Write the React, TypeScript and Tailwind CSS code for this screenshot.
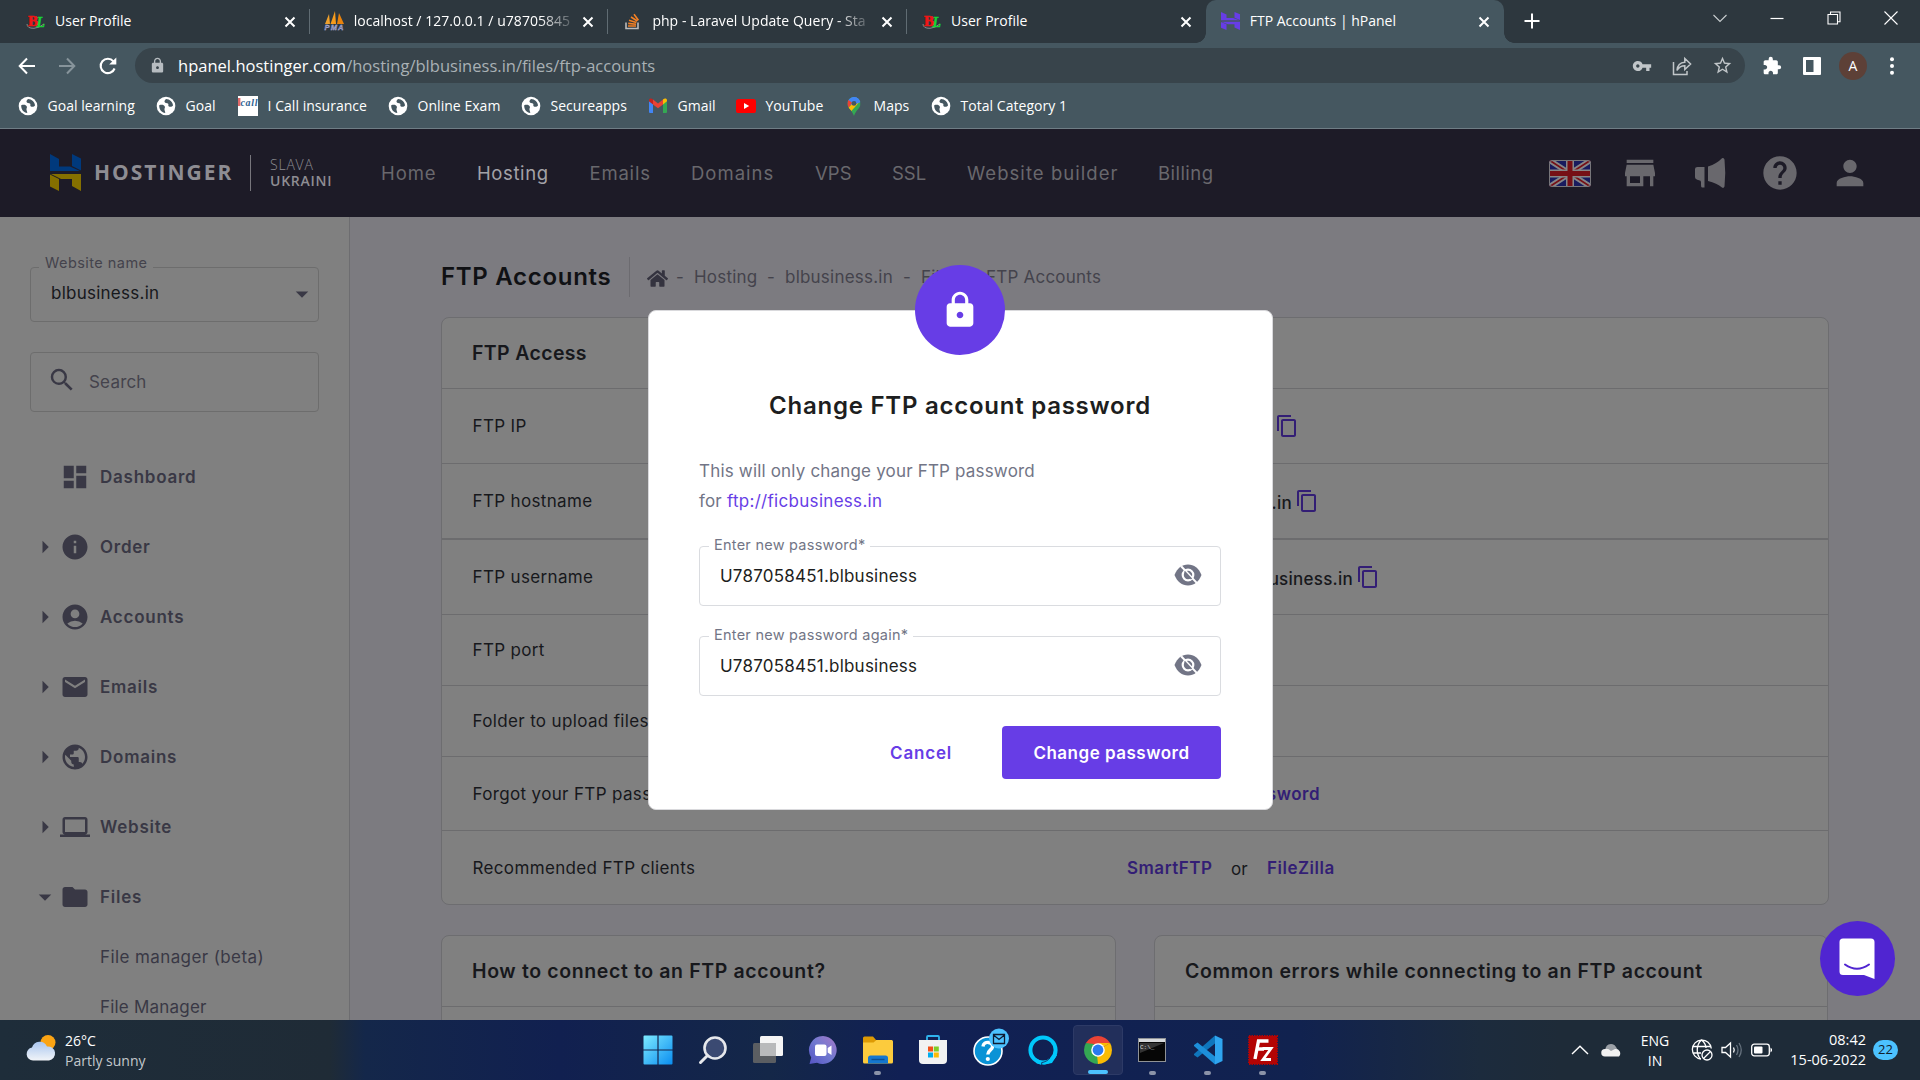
import type { ReactNode } from "react";
import {
  MdDashboard, MdInfo, MdAccountCircle, MdEmail, MdPublic, MdLaptop, MdFolder, MdSearch, MdLock,
  MdContentCopy, MdStore, MdHelp, MdPerson, MdVpnKey, MdStarBorder, MdExtension, MdArrowDropDown,
} from "react-icons/md";
import { FaHome } from "react-icons/fa";

/* ---------- Browser icons ---------- */

function BlIcon() {
  return (
    <svg viewBox="0 0 20 18" className="h-[18px] w-5">
      <path d="M1 12 Q1 16.500 8 16.300 Q13 16 18 12" fill="none" stroke="#858a8d" strokeWidth="1" />
      <text x="2" y="13.5" fontFamily="Liberation Serif, serif" fontWeight="700" fontSize="15" fill="#f01515" stroke="#f01515" strokeWidth="0.6">B</text>
      <text x="10.5" y="14.5" textLength="8.5" lengthAdjust="spacingAndGlyphs" fontFamily="Liberation Serif, serif" fontWeight="700" fontStyle="italic" fontSize="15" fill="#19d534" stroke="#19d534" strokeWidth="0.4">L</text>
    </svg>
  );
}

function PmaIcon() {
  return (
    <svg viewBox="0 0 20 20" className="size-5 overflow-visible">
      <path d="M5 3 L6 13 L1 13 Z" fill="#f0a12c" />
      <path d="M11 0 L12 13 L6.5 13 Z" fill="#f79b1c" />
      <path d="M15 2 L20 13 L13 13 Z" fill="#e8820c" />
      <text x="0.5" y="19.3" textLength="19" fontFamily="Liberation Sans, sans-serif" fontStyle="italic" fontWeight="700" fontSize="7.5" fill="#6d70a8" stroke="#c9cbe8" strokeWidth="0.3">PMA</text>
    </svg>
  );
}

function StackIcon() {
  return (
    <svg viewBox="0 0 18 18" className="h-[18px] w-[18px]">
      <path d="M2 10.5 V16.5 H14 V10.5" fill="none" stroke="#bcbbbb" strokeWidth="1.6" />
      <path d="M4 14 H12 M4.2 11.4 L12 12.2 M5 8.3 L12.4 10.4 M7 5 L13.3 9 M10 2.2 L14.4 8.2" stroke="#f48024" strokeWidth="1.6" fill="none" />
    </svg>
  );
}

function HostingerIcon({ top, bottom, className }: { top: string; bottom: string; className: string }) {
  return (
    <svg viewBox="0 0 31 37" className={className} preserveAspectRatio="none">
      <path d="M0 0 L9 5 V12.5 H20 L30 17 H0 Z M22 0 L31 4.5 V16.5 L22 12 Z" fill={top} />
      <path d="M31 37 L22 32 V25 H11 L1 20 H31 Z M0 20.5 L9 25 V37 L0 32.5 Z" fill={bottom} />
    </svg>
  );
}

function WebGlobe() {
  return (
    <svg viewBox="0 0 20 20" className="size-5">
      <circle cx="10" cy="10" r="9.3" fill="#fff" />
      <path d="M3.2 9.2 C6 8.4 8 8.8 8.8 10.6 C9.4 12 8 12.6 8.6 14.2 C9 15.4 9.2 16.2 9.3 17 C5.8 16.6 3 13.6 3.2 9.2 Z" fill="#455760" />
      <path d="M10 3 C13.8 3 16.8 6 17 9.4 C16.2 10.8 14 11.4 12.6 10.2 C11.8 9.4 13 8.4 12 7.6 C10.8 6.8 9.2 7.2 8.6 6 C8.2 4.8 9 4 10 3 Z" fill="#455760" />
    </svg>
  );
}

function IcallIcon() {
  return (
    <svg viewBox="0 0 20 20" className="size-5">
      <rect width="20" height="20" fill="#fff" />
      <rect x="0" y="2" width="2.4" height="8" fill="#e06a6a" />
      <text x="2.5" y="10" textLength="17" fontFamily="Liberation Serif, serif" fontStyle="italic" fontWeight="700" fontSize="10" fill="#2f6392">call</text>
    </svg>
  );
}

function GmailIcon() {
  return (
    <svg viewBox="0 0 20 16" className="h-4 w-5">
      <path d="M1 3 L5 6 V15 H2 A1 1 0 0 1 1 14 Z" fill="#4285f4" />
      <path d="M19 3 L15 6 V15 H18 A1 1 0 0 0 19 14 Z" fill="#34a853" />
      <path d="M1 3.2 V2.6 A2 2 0 0 1 4.4 1 L5 1.5 V6.4 Z" fill="#c5221f" />
      <path d="M19 3.2 V2.6 A2 2 0 0 0 15.6 1 L15 1.5 V6.4 Z" fill="#fbbc04" />
      <path d="M5 1.5 L10 5.4 L15 1.5 V6.4 L10 10.3 L5 6.4 Z" fill="#ea4335" />
    </svg>
  );
}

function YoutubeIcon() {
  return (
    <svg viewBox="0 0 20 14" className="h-3.5 w-5">
      <rect width="20" height="14" rx="2.6" fill="#f00" />
      <path d="M8 4 L13.2 7 L8 10 Z" fill="#fff" />
    </svg>
  );
}

function MapsIcon() {
  return (
    <svg viewBox="0 0 14 20" className="h-[19px] w-5">
      <clipPath id="pin">
        <path d="M7 0 A7 7 0 0 1 14 7 C14 11.5 9 13.5 7 20 C5 13.5 0 11.5 0 7 A7 7 0 0 1 7 0 Z" />
      </clipPath>
      <g clipPath="url(#pin)">
        <rect width="14" height="20" fill="#34a853" />
        <path d="M0 0 H14 L5 10 L0 6 Z" fill="#4285f4" />
        <path d="M0 2 L5 6 L1 12 L-2 8 Z" fill="#ea4335" />
        <path d="M1 11.5 L9.5 2.5 L12 6 L4 15 Z" fill="#fbbc04" />
        <path d="M5 0 H15 V5 L8 8 Z" fill="#4285f4" />
      </g>
      <circle cx="7" cy="6.8" r="2.5" fill="#455760" />
    </svg>
  );
}

function Close() {
  return (
    <svg viewBox="0 0 12 12" className="size-3 shrink-0" stroke="#fff" strokeWidth="2">
      <path d="M1.5 1.5 L10.5 10.5 M10.5 1.5 L1.5 10.5" />
    </svg>
  );
}

/* ---------- Browser chrome ---------- */

function Tab({ icon, title, active, line, fade }: { icon: ReactNode; title: string; active?: boolean; line?: boolean; fade?: boolean }) {
  return (
    <div className={"relative flex h-[43px] w-[298.7px] shrink-0 items-center pl-[14px] pr-[14px] " + (active ? "rounded-t-[10px] bg-[#455760]" : "")}>
      <span className="flex w-[21px] justify-center pb-0.5">{icon}</span>
      <span className={"ml-[9px] whitespace-nowrap pb-px text-sm text-white " + (fade ? "tracking-[0.04px] [mask-image:linear-gradient(to_right,black_86%,transparent_104%)]" : "")}>{title}</span>
      <span className="ml-auto"><Close /></span>
      {line && <i className="absolute right-0 top-[9px] h-[25px] w-px bg-[#606c73]" />}
      {active && (
        <>
          <i className="absolute -left-2.5 bottom-0 size-2.5 bg-[radial-gradient(circle_at_0_0,#2d373e_9.5px,#455760_10px)]" />
          <i className="absolute -right-2.5 bottom-0 size-2.5 bg-[radial-gradient(circle_at_100%_0,#2d373e_9.5px,#455760_10px)]" />
        </>
      )}
    </div>
  );
}

function TabStrip() {
  return (
    <div className="flex h-[43px] bg-[#2d373e] pl-[11px]">
      <Tab icon={<BlIcon />} title="User Profile" line />
      <Tab icon={<PmaIcon />} title="localhost / 127.0.0.1 / u78705845" line fade />
      <Tab icon={<StackIcon />} title="php - Laravel Update Query - Sta" line fade />
      <Tab icon={<BlIcon />} title="User Profile" />
      <Tab icon={<HostingerIcon top="#673de6" bottom="#673de6" className="h-[18px] w-[19px]" />} title="FTP Accounts | hPanel" active />
      <svg viewBox="0 0 16 16" className="ml-[20px] mt-[13px] size-4" stroke="#fff" strokeWidth="2">
        <path d="M8 0.5 V15.5 M0.5 8 H15.5" />
      </svg>
      <div className="ml-auto flex h-9 items-center gap-[43px] pr-[22px]">
        <svg viewBox="0 0 14 14" className="size-3.5" fill="none" stroke="#c9ced1" strokeWidth="1.1"><path d="M0.5 4 L7 10.5 L13.5 4" /></svg>
        <svg viewBox="0 0 14 14" className="size-3.5" stroke="#fff" strokeWidth="1.2"><path d="M0.5 7.5 H13.5" /></svg>
        <svg viewBox="0 0 14 14" className="size-3.5" fill="none" stroke="#fff" strokeWidth="1.1"><path d="M1 3.5 H10.5 V13 H1 Z M3.5 3.5 V1 H13 V10.8 H10.5" /></svg>
        <svg viewBox="0 0 14 14" className="size-3.5" stroke="#fff" strokeWidth="1.1"><path d="M0.5 0.5 L13.5 13.5 M13.5 0.5 L0.5 13.5" /></svg>
      </div>
    </div>
  );
}

function AddressRow() {
  return (
    <div className="flex h-[45px] items-center">
      <svg viewBox="0 0 18 18" className="ml-[18px] size-[18px]" fill="none" stroke="#fff" strokeWidth="2"><path d="M17 9 H2 M9 1.5 L1.7 9 L9 16.5" /></svg>
      <svg viewBox="0 0 18 18" className="ml-[22px] size-[18px]" fill="none" stroke="#87949b" strokeWidth="2"><path d="M1 9 H16 M9 1.5 L16.3 9 L9 16.5" /></svg>
      <svg viewBox="0 0 18 18" className="ml-[23px] size-[18px]" fill="none" stroke="#fff" strokeWidth="2.1"><path d="M15.6 11.5 A7.2 7.2 0 1 1 14.4 4.3 L16 6" /><path d="M17.3 0.5 V7.6 H10.2 Z" fill="#fff" stroke="none" /></svg>
      <div className="ml-[18px] flex h-[35px] w-[1610px] items-center rounded-full bg-[#38444b] pl-[14px] pr-[12px]">
        <MdLock className="size-[17px] text-[#b6bcc0]" />
        <span className="ml-[12px] whitespace-nowrap pt-px text-[16.5px] tracking-[0.02px] text-[#a9b1b5]"><span className="text-white">hpanel.hostinger.com</span>/hosting/blbusiness.in/files/ftp-accounts</span>
        <div className="ml-auto flex items-center gap-[20px] text-[#c1c6c9]">
          <MdVpnKey className="size-5" />
          <svg viewBox="0 0 20 20" className="size-5" fill="none" stroke="currentColor" strokeWidth="1.5"><path d="M1.5 6 V18.5 H15 V15" /><path d="M5 14.5 C5.4 9.5 8 6.4 12.8 6.2 V2.4 L18.6 8 L12.8 13.6 V9.8 C9.6 9.8 7 11 5 14.5 Z" /></svg>
          <MdStarBorder className="size-[21px]" />
        </div>
      </div>
      <MdExtension className="ml-[17px] size-5 text-white" />
      <svg viewBox="0 0 18 18" className="ml-[21px] size-[18px]"><rect width="18" height="18" rx="1" fill="#fff" /><rect x="3" y="3" width="7.5" height="12" fill="#455760" /></svg>
      <span className="ml-[18px] flex size-7 items-center justify-center rounded-full bg-[#5d4037] text-sm text-white">A</span>
      <svg viewBox="0 0 4 18" className="ml-[23px] h-[18px] w-1" fill="#fff"><circle cx="2" cy="2.2" r="2" /><circle cx="2" cy="9" r="2" /><circle cx="2" cy="15.8" r="2" /></svg>
    </div>
  );
}

const bookmarks: { icon: ReactNode; label: string; w: string }[] = [
  { icon: <WebGlobe />, label: "Goal learning", w: "w-[138px]" },
  { icon: <WebGlobe />, label: "Goal", w: "w-[82px]" },
  { icon: <IcallIcon />, label: "I Call insurance", w: "w-[150px]" },
  { icon: <WebGlobe />, label: "Online Exam", w: "w-[133px]" },
  { icon: <WebGlobe />, label: "Secureapps", w: "w-[127px]" },
  { icon: <GmailIcon />, label: "Gmail", w: "w-[88px]" },
  { icon: <YoutubeIcon />, label: "YouTube", w: "w-[108px]" },
  { icon: <MapsIcon />, label: "Maps", w: "w-[87px]" },
  { icon: <WebGlobe />, label: "Total Category 1", w: "w-[140px]" },
];

function BookmarkBar() {
  return (
    <div className="flex h-[36px] items-center pl-[18px]">
      {bookmarks.map((b) => (
        <div key={b.label} className={"flex shrink-0 items-center gap-[9.5px] whitespace-nowrap text-sm tracking-[0.04px] text-white " + b.w}>
          {b.icon}
          {b.label}
        </div>
      ))}
    </div>
  );
}

/* ---------- hPanel header ---------- */

const nav: { label: string; c: string }[] = [
  { label: "Home", c: "w-[96px] tracking-[0.9px]" },
  { label: "Hosting", c: "w-[112.5px] text-[#a3a2a7] tracking-[0.6px]" },
  { label: "Emails", c: "w-[101.5px] tracking-[0.8px]" },
  { label: "Domains", c: "w-[124px] tracking-[1px]" },
  { label: "VPS", c: "w-[77px] tracking-[0.1px]" },
  { label: "SSL", c: "w-[75px] tracking-[0px]" },
  { label: "Website builder", c: "w-[191px] tracking-[1.05px]" },
  { label: "Billing", c: "tracking-[0.45px]" },
];

function Flag() {
  return (
    <svg viewBox="0 0 42 27" className="h-[27px] w-[42px]">
      <clipPath id="flag"><rect width="42" height="27" rx="3" /></clipPath>
      <g clipPath="url(#flag)">
        <rect width="42" height="27" fill="#181b5e" />
        <path d="M0 0 L42 27 M42 0 L0 27" stroke="#858587" strokeWidth="5.5" />
        <path d="M0 0 L42 27 M42 0 L0 27" stroke="#761016" strokeWidth="1.8" />
        <path d="M21 0 V27 M0 13.5 H42" stroke="#858587" strokeWidth="8" />
        <path d="M21 0 V27 M0 13.5 H42" stroke="#761016" strokeWidth="5" />
      </g>
      <rect x="0.5" y="0.5" width="41" height="26" rx="3" fill="none" stroke="#77767a" />
    </svg>
  );
}

function Header() {
  return (
    <header className="flex h-[88px] shrink-0 items-center bg-[#1d1b27] font-[Inter,sans-serif] text-[#69686d]">
      <HostingerIcon top="#00397c" bottom="#857000" className="mb-px ml-[50px] h-[37px] w-[31px]" />
      <span className="ml-[13px] w-[156px] font-['Open_Sans',sans-serif] text-[21px] font-bold tracking-[2px] text-[#8e8d93]">HOSTINGER</span>
      <i className="h-9 w-px bg-[#77767c]" />
      <span className="ml-[19px] flex w-[111px] flex-col font-['Open_Sans',sans-serif] text-sm leading-4 text-[#8e8d93]">
        <span className="font-light tracking-[0.8px]">SLAVA</span>
        <b className="font-semibold tracking-[0.75px]">UKRAINI</b>
      </span>
      <nav className="flex pt-px text-[18.5px]">
        {nav.map((n) => <span key={n.label} className={"shrink-0 whitespace-nowrap " + n.c}>{n.label}</span>)}
      </nav>
      <div className="ml-auto flex items-center gap-[30px] pr-[50px]">
        <Flag />
        <MdStore className="-ml-px size-10" />
        <svg viewBox="0 0 40 40" className="size-10" fill="currentColor">
          <path d="M5 16 Q5 14 7.500 14 H14.500 V34.500 H12 Q11 34.500 11 32 V29 Q11 27.500 9 27.200 Q5 26.500 5 24 Z" />
          <path d="M18 13.500 Q27 10.500 32 5.200 Q33.500 4.500 34.500 6.500 Q36 20 34.500 33.500 Q33.500 35.800 32 34.500 Q27 30 18 28 Z" />
        </svg>
        <MdHelp className="size-10" />
        <MdPerson className="size-10" />
      </div>
    </header>
  );
}

/* ---------- Sidebar ---------- */

const menu = [
  { Icon: MdDashboard, label: "Dashboard", arrow: "" },
  { Icon: MdInfo, label: "Order", arrow: "right" },
  { Icon: MdAccountCircle, label: "Accounts", arrow: "right" },
  { Icon: MdEmail, label: "Emails", arrow: "right" },
  { Icon: MdPublic, label: "Domains", arrow: "right" },
  { Icon: MdLaptop, label: "Website", arrow: "right" },
  { Icon: MdFolder, label: "Files", arrow: "down" },
];

function Sidebar() {
  return (
    <aside className="flex w-[350px] shrink-0 flex-col border-r border-[#6d6d70] bg-[#808080] pt-[50px] text-[#393845]">
      <div className="relative ml-[30px] flex h-[55px] w-[289px] shrink-0 items-center rounded border border-[#6d6d6d] pl-[20px] pr-px">
        <span className="absolute -top-[16px] left-[8px] bg-[#808080] px-[6px] text-[14.5px] tracking-[0.45px] text-[#44434c]">Website name</span>
        <span className="pb-0.5 text-[17px] tracking-[0.25px] text-[#17181c]">blbusiness.in</span>
        <MdArrowDropDown className="mb-px ml-auto size-[30px]" />
      </div>
      <div className="ml-[30px] mt-[30px] flex h-[60px] w-[289px] shrink-0 items-center rounded border border-[#6d6d6d] pl-[16px]">
        <MdSearch className="mb-[5px] size-[30px]" />
        <span className="ml-[12px] pt-0.5 text-[17px] tracking-[0.2px] text-[#44434c]">Search</span>
      </div>
      <div className="mt-[30px] flex shrink-0 flex-col">
        {menu.map(({ Icon, label, arrow }) => (
          <div key={label} className="flex h-[70px] items-center">
            <span className="ml-[30px] w-[30px]">
              {arrow === "right" && <MdArrowDropDown className="size-[30px] -rotate-90" />}
              {arrow === "down" && <MdArrowDropDown className="size-[30px]" />}
            </span>
            <Icon className="size-[30px]" />
            <span className="ml-[10px] pt-0.5 text-[17px] font-semibold tracking-[0.75px]">{label}</span>
          </div>
        ))}
        <span className="flex h-[50px] items-center pl-[100px] pt-0.5 text-[17px] tracking-[0.4px]">File manager (beta)</span>
        <span className="flex h-[50px] items-center pl-[100px] pt-0.5 text-[17px] tracking-[0.2px]">File Manager</span>
      </div>
    </aside>
  );
}

/* ---------- Content ---------- */

function Row({ label, h, children }: { label: string; h: string; children?: ReactNode }) {
  return (
    <div className={"flex items-center border-[#6c6c6e] px-[30px] " + h}>
      <span className="w-[655px] whitespace-nowrap pl-[0.5px] pt-0.5 text-[17px] tracking-[0.35px]">{label}</span>
      {children}
    </div>
  );
}

function Panel({ title, left }: { title: string; left?: boolean }) {
  return (
    <section className={"flex h-[120px] flex-col rounded-lg border border-[#6d6d70] bg-[#808080] " + (left ? "w-[675px]" : "w-[674px]")}>
      <h2 className="flex h-[71px] shrink-0 items-center whitespace-nowrap border-b border-[#6c6c6e] px-[30px] pt-0.5 text-[19.5px] font-semibold tracking-[0.62px]">{title}</h2>
    </section>
  );
}

const linkCls = "whitespace-nowrap pt-0.5 text-[17px] font-semibold tracking-[0.5px] text-[#331e75]";
const valueCls = "whitespace-nowrap pt-1.5 text-[17px] font-medium tracking-[0.25px]";

function Content() {
  return (
    <main className="flex flex-1 flex-col pl-[91px] pt-[30px] text-[#17181c]">
      <div className="flex h-[60px] shrink-0 items-center">
        <h1 className="w-[188px] whitespace-nowrap text-[24px] font-semibold tracking-[0.7px] text-[#101114]">FTP Accounts</h1>
        <i className="h-10 w-px bg-[#6c6b70]" />
        <FaHome className="ml-[17px] mt-0.5 size-[21px] text-[#34333f]" />
        <div className="ml-[8px] flex whitespace-nowrap pt-0.5 text-[17px] tracking-[0.22px] text-[#44434c]">
          <span className="w-[18px]">-</span>
          <span className="w-[73px]">Hosting</span>
          <span className="w-[18px]">-</span>
          <span className="w-[118px]">blbusiness.in</span>
          <span className="w-[18px]">-</span>
          <span className="w-[65px]">Files -</span>
          <span>FTP Accounts</span>
        </div>
      </div>
      <section className="mt-[10px] flex h-[588px] w-[1388px] shrink-0 flex-col rounded-lg border border-[#6d6d70] bg-[#808080]">
        <h2 className="flex h-[71px] items-center border-b border-[#6c6c6e] px-[30px] pt-0.5 text-[19.5px] font-semibold tracking-[0.35px]">FTP Access</h2>
        <Row label="FTP IP" h="h-[75px] border-b"><MdContentCopy className="ml-[148px] size-6 text-[#331e75]" /></Row>
        <Row label="FTP hostname" h="h-[76px] border-b-2">
          <span className={valueCls + " flex w-[165px] justify-end"}>ftp://blbusiness.in</span>
          <MdContentCopy className="ml-[3px] size-6 text-[#331e75]" />
        </Row>
        <Row label="FTP username" h="h-[75px] border-b">
          <span className={valueCls + " flex w-[226px] justify-end"}>u787058451.blbusiness.in</span>
          <MdContentCopy className="ml-[3px] size-6 text-[#331e75]" />
        </Row>
        <Row label="FTP port" h="h-[71px] border-b" />
        <Row label="Folder to upload files" h="h-[71px] border-b" />
        <Row label="Forgot your FTP password?" h="h-[74px] border-b">
          <span className={linkCls + " flex w-[193px] justify-end"}>Change FTP password</span>
        </Row>
        <Row label="Recommended FTP clients" h="h-[73px]">
          <span className={linkCls + " w-[104px]"}>SmartFTP</span>
          <span className="w-[36px] pt-1 text-[17px]">or</span>
          <span className={linkCls}>FileZilla</span>
        </Row>
      </section>
      <div className="mt-[30px] flex shrink-0 gap-[38px]">
        <Panel title="How to connect to an FTP account?" left />
        <Panel title="Common errors while connecting to an FTP account" />
      </div>
    </main>
  );
}

/* ---------- Password dialog ---------- */

function HiddenEye() {
  return (
    <svg viewBox="0 0 28 24" className="h-6 w-7">
      <path d="M0.500 12 C3 5.500 8 1.500 14 1.500 C20 1.500 25 5.500 27.500 12 C25 18.500 20 22.500 14 22.500 C8 22.500 3 18.500 0.500 12 Z" fill="#727586" />
      <circle cx="14" cy="12" r="5.300" fill="none" stroke="#fff" strokeWidth="2.200" />
      <path d="M7.200 3.200 L23.200 20.400" stroke="#fff" strokeWidth="2" />
      <path d="M10.500 8.500 L17.500 16" stroke="#727586" strokeWidth="1.600" />
    </svg>
  );
}

function Field({ label }: { label: string }) {
  return (
    <div className="relative flex h-[60px] items-center rounded border border-[#dadce0] pl-[20px] pr-[18px]">
      <span className="absolute -top-[13px] left-[9px] whitespace-nowrap bg-white px-[5px] text-[14.5px] tracking-[0.25px] text-[#727586]">{label}</span>
      <span className="pt-0.5 text-[17px] tracking-[0.22px] text-[#1d1e20]">U787058451.blbusiness</span>
      <span className="mb-0.5 ml-auto"><HiddenEye /></span>
    </div>
  );
}

function Dialog() {
  return (
    <div role="dialog" className="absolute left-[648px] top-[310px] flex h-[500px] w-[625px] flex-col rounded-lg border border-[#d9d9dc] bg-white pl-[50px] pr-[51px] font-[Inter,sans-serif]">
      <span className="absolute -top-[46px] left-[266px] flex size-[90px] items-center justify-center rounded-full bg-[#673de6]">
        <MdLock className="size-10 text-white" />
      </span>
      <h2 className="mt-[77px] whitespace-nowrap text-center text-[24px] font-semibold leading-9 tracking-[0.75px] text-[#1d1e20]">Change FTP account password</h2>
      <p className="mt-[32px] text-[17px] leading-[30px] tracking-[0.18px] text-[#727586]">
        This will only change your FTP password<br />for <span className="tracking-[0.3px] text-[#673de6]">ftp://ficbusiness.in</span>
      </p>
      <div className="mt-[30px] flex flex-col gap-[30px]">
        <Field label="Enter new password*" />
        <Field label="Enter new password again*" />
      </div>
      <div className="mt-[30px] flex items-center justify-end text-[17px] font-semibold">
        <span className="pt-0.5 tracking-[0.8px] text-[#673de6]">Cancel</span>
        <span className="ml-[50px] flex h-[53px] w-[219px] items-center justify-center rounded bg-[#673de6] pt-0.5 tracking-[0.5px] text-white">Change password</span>
      </div>
    </div>
  );
}

function ChatBubble() {
  return (
    <span className="absolute left-[1820px] top-[921px] flex size-[75px] items-center justify-center rounded-full bg-[#5025d1]">
      <svg viewBox="0 0 36 42" className="mr-px h-[42px] w-9">
        <path d="M4 0.500 H32 A3.500 3.500 0 0 1 35.500 4 V41 L25 37 H4 A3.500 3.500 0 0 1 0.500 33.500 V4 A3.500 3.500 0 0 1 4 0.500 Z" fill="#fff" />
        <path d="M6 26.500 Q18 35 30 26.500" fill="none" stroke="#5025d1" strokeWidth="2" strokeLinecap="round" />
      </svg>
    </span>
  );
}

/* ---------- Taskbar ---------- */

const WinIcon = (
  <svg viewBox="0 0 30 30" className="size-[30px]">
    <defs><linearGradient id="win" x1="0" y1="0" x2="1" y2="1"><stop offset="0" stopColor="#7deaff" /><stop offset="1" stopColor="#0a8df0" /></linearGradient></defs>
    <path d="M0.500 1.500 A1 1 0 0 1 1.500 0.500 H14.400 V14.400 H0.500 Z M15.600 0.500 H28.500 A1 1 0 0 1 29.500 1.500 V14.400 H15.600 Z M0.500 15.600 H14.400 V29.500 H1.500 A1 1 0 0 1 0.500 28.500 Z M15.600 15.600 H29.500 V28.500 A1 1 0 0 1 28.500 29.500 H15.600 Z" fill="url(#win)" />
  </svg>
);
const SearchIcon = (
  <svg viewBox="0 0 30 30" className="size-[30px]" fill="none" stroke="#e6e8ec" strokeWidth="2.600">
    <circle cx="17" cy="13" r="10.500" fill="#3b4a72" /><path d="M9.500 20.500 L2.500 27.500" strokeWidth="3" strokeLinecap="round" />
  </svg>
);
const TaskViewIcon = (
  <svg viewBox="0 0 30 30" className="size-[30px]">
    <rect x="7" y="1" width="23" height="20" rx="1.500" fill="#f5f5f5" /><rect x="0" y="8" width="23" height="20" rx="1.500" fill="#5b5e62" /><rect x="7" y="8" width="16" height="13" fill="#b9babb" />
  </svg>
);
const ChatIcon = (
  <svg viewBox="0 0 30 30" className="size-[30px]">
    <defs><linearGradient id="chat" x1="1" y1="0" x2="0" y2="1"><stop offset="0" stopColor="#a678c8" /><stop offset="0.500" stopColor="#7079d0" /><stop offset="1" stopColor="#5553c4" /></linearGradient></defs>
    <path d="M15 1 A14 14 0 1 1 9 27.800 L1.500 29 L3.200 22.500 A14 14 0 0 1 15 1 Z" fill="url(#chat)" />
    <rect x="7" y="9.500" width="11.500" height="11.500" rx="2" fill="#fff" /><path d="M19.700 13 L23.500 10.500 V20 L19.700 17.500 Z" fill="#fff" />
  </svg>
);
const FilesIcon = (
  <svg viewBox="0 0 30 30" className="size-[30px]">
    <path d="M0 3 A1.500 1.500 0 0 1 1.500 1.500 H10 L13 5 H29 V12 H0 Z" fill="#dd9a04" />
    <path d="M0 7.500 H10.500 L13.500 5 H28.500 A1.500 1.500 0 0 1 30 6.500 V27 A1.500 1.500 0 0 1 28.500 28.500 H1.500 A1.500 1.500 0 0 1 0 27 Z" fill="#fccb3d" />
    <path d="M5 28.500 V23 A2.500 2.500 0 0 1 7.500 20.500 H22.500 A2.500 2.500 0 0 1 25 23 V28.500 Z" fill="#1577cf" /><path d="M8.500 24.500 H21.500" stroke="#0c4f93" strokeWidth="1.400" />
  </svg>
);
const StoreIcon = (
  <svg viewBox="0 0 30 30" className="size-[30px]">
    <path d="M9 6 V2 A1 1 0 0 1 10 1 H20 A1 1 0 0 1 21 2 V6" fill="none" stroke="#2fb4ee" strokeWidth="1.800" />
    <path d="M1 5 H29 V25 A4 4 0 0 1 25 29 H5 A4 4 0 0 1 1 25 Z" fill="#f2f2f2" />
    <rect x="10" y="11.500" width="5" height="5" fill="#f1511b" /><rect x="15.800" y="11.500" width="5" height="5" fill="#80cc28" /><rect x="10" y="17.500" width="5" height="5" fill="#00adef" /><rect x="15.800" y="17.500" width="5" height="5" fill="#fbbc09" />
  </svg>
);
const HelpIcon = (
  <svg viewBox="0 0 38 38" className="-mt-1.5 ml-2 size-[38px]">
    <circle cx="15" cy="23" r="14" fill="#0a93d6" stroke="#fff" strokeWidth="1.600" />
    <path d="M10 18.500 C10.500 12.500 20.500 13.500 19.500 19 C19 22 15 22 14.800 26.500" fill="none" stroke="#fff" strokeWidth="3.400" /><circle cx="14.800" cy="31" r="2.100" fill="#fff" />
    <circle cx="26" cy="10.500" r="10" fill="#4cc2ff" /><path d="M20.500 6.500 H31.500 V15.500 H20.500 Z M20.500 7 L26 11.500 L31.500 7" fill="none" stroke="#0f1c33" strokeWidth="1.300" />
  </svg>
);
const AlexaIcon = (
  <svg viewBox="0 0 30 30" className="size-[30px]">
    <circle cx="15" cy="15" r="12.600" fill="none" stroke="#00c8fb" strokeWidth="4" />
    <path d="M9 24 C12 25 13.500 25.500 13.500 28 V30 C20 28 24 24.500 26 19 L29 20 L24 28 L14 30 L8 28 Z" fill="#00c8fb" />
    <path d="M13.700 30 V27.600 C17 27 20 25.500 22 23 L20.500 21.500" fill="none" stroke="#112050" strokeWidth="0.800" />
  </svg>
);
const ChromeIcon = (
  <svg viewBox="0 0 28 28" className="size-7">
    <path d="M14 14 L1.900 7 A14 14 0 0 1 26.100 7 Z" fill="#ea4335" /><path d="M14 14 L26.100 7 A14 14 0 0 1 14 28 Z" fill="#fbbc04" /><path d="M14 14 L14 28 A14 14 0 0 1 1.900 7 Z" fill="#34a853" />
    <path d="M14 7 H26.100 L20 10.500 Z" fill="#fbbc04" /><path d="M8 17.500 L1.900 7 L10 8 Z" fill="#34a853" /><path d="M20 17.500 L14 28 L13 19 Z" fill="#fbbc04" />
    <circle cx="14" cy="14" r="6.800" fill="#fff" /><circle cx="14" cy="14" r="5.400" fill="#2a7af0" />
  </svg>
);
const CmdIcon = (
  <svg viewBox="0 0 28 24" className="mr-px h-6 w-7">
    <rect x="0.500" y="0.500" width="27" height="23" fill="#060606" stroke="#8f9296" /><rect x="1" y="1" width="26" height="3" fill="#d7d9db" />
    <path d="M2 5 H26 L2 15 Z" fill="#333" /><text x="2" y="10.500" fontFamily="Liberation Mono, monospace" fontSize="6" fill="#ddd">C:\_</text>
  </svg>
);
const CodeIcon = (
  <svg viewBox="0 0 30 30" className="size-[30px]">
    <path d="M22 0.500 L29.500 4 V26 L22 29.500 Z" fill="#2fa5f0" /><path d="M22 0.500 V8.500 L4.500 22.500 L1 20 V19 Z" fill="#0f76bd" /><path d="M22 29.500 V21.500 L4.500 7.500 L1 10 V11 Z" fill="#1d8fda" />
  </svg>
);
const FileZillaIcon = (
  <svg viewBox="0 0 30 30" className="size-[30px]">
    <rect x="1" y="1" width="28" height="28" fill="#b30404" stroke="#b30404" strokeWidth="2" strokeDasharray="1.500 1" />
    <path d="M7 24 L10.500 6 H20.500 M8.800 14 H16" fill="none" stroke="#fff" strokeWidth="3.400" /><path d="M14.500 13.500 H23 L15 24.500 H23" fill="none" stroke="#fff" strokeWidth="2.800" />
  </svg>
);

const apps: { icon: ReactNode; state?: "open" | "active" }[] = [
  { icon: WinIcon }, { icon: SearchIcon }, { icon: TaskViewIcon }, { icon: ChatIcon }, { icon: FilesIcon, state: "open" }, { icon: StoreIcon },
  { icon: HelpIcon }, { icon: AlexaIcon }, { icon: ChromeIcon, state: "active" }, { icon: CmdIcon, state: "open" }, { icon: CodeIcon, state: "open" }, { icon: FileZillaIcon, state: "open" },
];

function Taskbar() {
  return (
    <footer className="flex h-[60px] shrink-0 items-center bg-[linear-gradient(90deg,#1e2d3a_0,#1f2b36_330px,#14274a_365px,#112050_560px,#142748_770px,#112054_900px,#11224f_1300px,#1c2b3d_1480px,#1e2b38_1560px)] text-white">
      <svg viewBox="0 0 30 28" className="-mt-1 ml-[26px] h-7 w-[30px]">
        <defs><linearGradient id="cloud" x1="0" y1="0" x2="0" y2="1"><stop offset="0" stopColor="#a9c6ef" /><stop offset="1" stopColor="#f1f4f8" /></linearGradient></defs>
        <circle cx="22" cy="8.500" r="7.500" fill="#fba414" />
        <path d="M7 26.500 A6.500 6.500 0 0 1 6 13.600 A8 8 0 0 1 21 12.500 A7 7 0 0 1 23 26.500 Z" fill="url(#cloud)" />
      </svg>
      <div className="ml-[9px] flex w-[565px] flex-col pt-0.5 text-sm leading-5"><span>26°C</span><span className="text-[#c3c8cc]">Partly sunny</span></div>
      <div className="flex">
        {apps.map((a, i) => (
          <div key={i} className={"relative mx-[2.5px] flex h-[50px] w-[50px] items-center justify-center rounded " + (a.state === "active" ? "border border-[#2d3a66] bg-[#222f5b]" : "")}>
            {a.icon}
            {a.state === "open" && <i className="absolute -bottom-0 h-1 w-[7px] rounded-full bg-[#8b93a8]" />}
            {a.state === "active" && <i className="absolute -bottom-0 h-1 w-5 rounded-full bg-[#4cc2ff]" />}
          </div>
        ))}
      </div>
      <div className="ml-auto flex items-center pr-[22px]">
        <svg viewBox="0 0 18 10" className="h-2.5 w-[18px]" fill="none" stroke="#fff" strokeWidth="1.400"><path d="M1 9 L9 1.200 L17 9" /></svg>
        <svg viewBox="0 0 22 14" className="ml-[12px] h-3.5 w-[22px]"><path d="M5 9 A5.500 5.500 0 0 1 15 4 L18 9 Z" fill="#9ba0a6" /><path d="M4 13.500 A3.700 3.700 0 0 1 4 6 Q7 5 10 8 L14 6 A4.500 4.500 0 0 1 18 13.500 Z" fill="#f1f1f1" /></svg>
        <div className="ml-[16px] flex w-[32px] flex-col items-center pt-0.5 text-sm leading-5"><span>ENG</span><span>IN</span></div>
        <svg viewBox="0 0 22 22" className="ml-[20px] size-[22px]" fill="none" stroke="#fff" strokeWidth="1.300"><path d="M10 20 A9.500 9.500 0 1 1 20.300 9.500 M1.500 7.500 H19.500 M1.500 14 H10 M10.500 1 C5 6 5 15 9.500 20 M10.500 1 C14 4 15 6.500 15 9" /><circle cx="16" cy="16" r="5" /><path d="M12.500 19.500 L19.500 12.500" /></svg>
        <svg viewBox="0 0 22 20" className="ml-[8px] h-5 w-[22px]" fill="none" stroke="#fff" strokeWidth="1.300"><path d="M1 7.500 H4.500 L9.500 3 V17 L4.500 12.500 H1 Z" /><path d="M12.500 7.500 Q14 10 12.500 12.500" /><path d="M15.500 5 Q18.500 10 15.500 15 M18 3 Q22.500 10 18 17" stroke="#66727e" /></svg>
        <svg viewBox="0 0 22 14" className="ml-[8px] h-3.5 w-[22px]"><rect x="0.700" y="1.200" width="17.600" height="11.600" rx="2.500" fill="none" stroke="#fff" strokeWidth="1.300" /><rect x="3" y="3.500" width="8.500" height="7" rx="1" fill="#fff" /><path d="M19.500 4.500 V9.500 L21 8 V6 Z" fill="#fff" /></svg>
        <div className="ml-[15px] flex w-[78px] flex-col items-end whitespace-nowrap text-[14.5px] leading-5"><span>08:42</span><span>15-06-2022</span></div>
        <span className="ml-[7px] flex h-5 w-[25px] items-center justify-center rounded-full bg-[#4cc2ff] text-[13px] text-[#12202c]">22</span>
      </div>
    </footer>
  );
}

export default function App() {
  return (
    <div className="relative flex h-[1080px] w-[1920px] flex-col overflow-hidden bg-[#455760] font-['Open_Sans',sans-serif]">
      <TabStrip />
      <AddressRow />
      <BookmarkBar />
      <div className="h-[5px] shrink-0 border-b border-[#6f7d85]" />
      <Header />
      <div className="flex h-[803px] shrink-0 overflow-hidden bg-[#7c7b80] font-[Inter,sans-serif]">
        <Sidebar />
        <Content />
      </div>
      <Taskbar />
      <Dialog />
      <ChatBubble />
    </div>
  );
}
